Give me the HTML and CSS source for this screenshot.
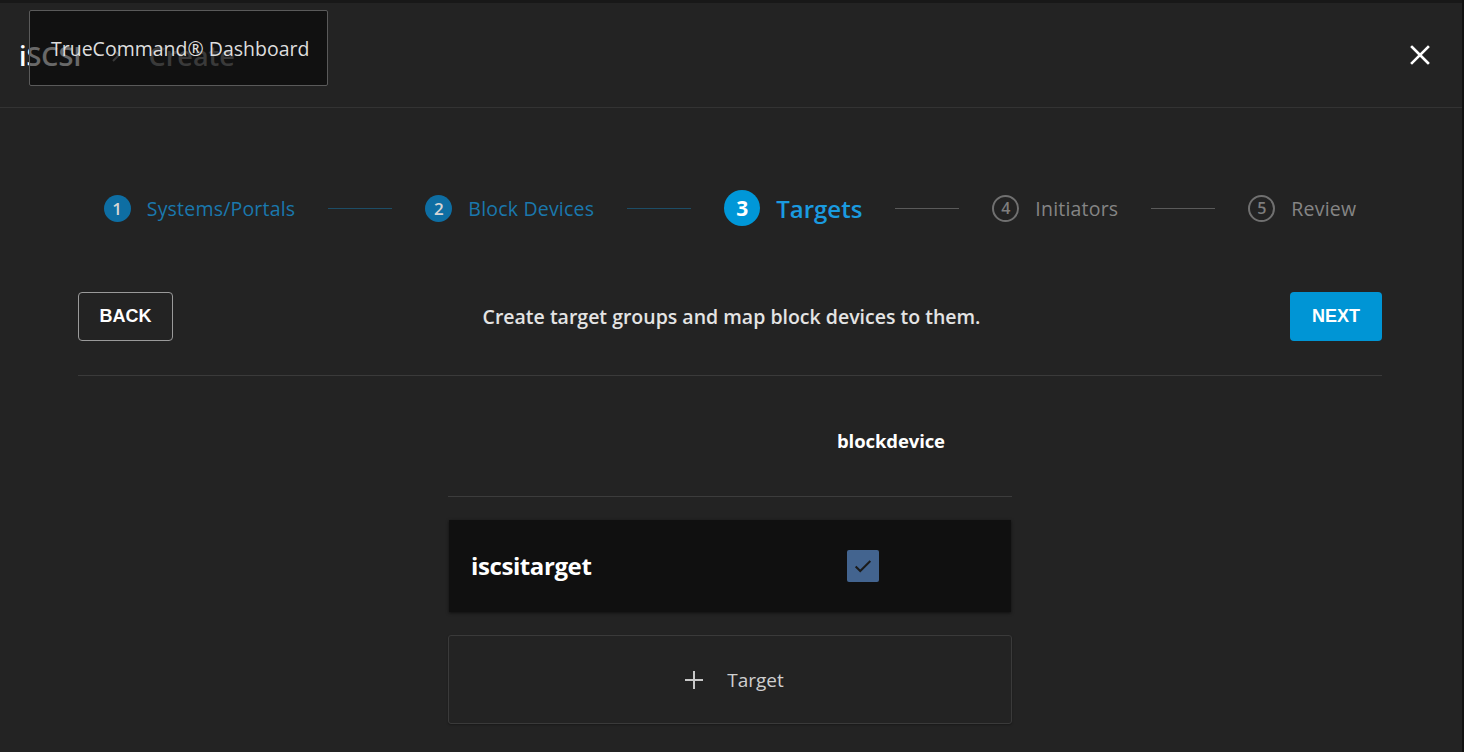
FILE: index.html
```html
<!DOCTYPE html>
<html>
<head>
<meta charset="utf-8">
<link rel="stylesheet" href="styles.css">
</head>
<body>
<div class="app">
  <header class="header">
    <h1 class="title"><span class="crumb">iSCSI</span><span class="chev"><svg width="12" height="16" viewBox="0 0 12 16"><path d="M3 2l6 6-6 6" fill="none" stroke="#8a8a8a" stroke-width="2"/></svg></span><span class="crumb-cur">Create</span></h1>
    <div class="tooltip">TrueCommand® Dashboard</div>
    <button class="close" aria-label="close"><svg width="20" height="20" viewBox="0 0 20 20"><path d="M2 2L18 18M18 2L2 18" stroke="#fff" stroke-width="2.6" stroke-linecap="square"/></svg></button>
  </header>
  <main class="main">
    <nav class="stepper">
      <div class="step done"><span class="num">1</span><span class="label">Systems/Portals</span></div>
      <span class="line done"></span>
      <div class="step done"><span class="num">2</span><span class="label">Block Devices</span></div>
      <span class="line done"></span>
      <div class="step active"><span class="num">3</span><span class="label">Targets</span></div>
      <span class="line"></span>
      <div class="step todo"><span class="num">4</span><span class="label">Initiators</span></div>
      <span class="line"></span>
      <div class="step todo"><span class="num">5</span><span class="label">Review</span></div>
    </nav>
    <div class="actions">
      <button class="btn btn-back">BACK</button>
      <p class="desc">Create target groups and map block devices to them.</p>
      <button class="btn btn-next">NEXT</button>
    </div>
    <div class="table">
      <div class="thead">
        <span></span>
        <span class="col">blockdevice</span>
      </div>
      <div class="row">
        <span class="name">iscsitarget</span>
        <span class="cell"><span class="checkbox"><svg width="22" height="22" viewBox="0 0 24 24"><path d="M4 12.5l5 5L20 6.5" fill="none" stroke="#1b1b1b" stroke-width="2.2"/></svg></span></span>
      </div>
      <div class="add">
        <svg width="22" height="22" viewBox="0 0 22 22"><path d="M11 2v18M2 11h18" stroke="#c8c8c8" stroke-width="2"/></svg>
        <span>Target</span>
      </div>
    </div>
  </main>
</div>
</body>
</html>
```
FILE: styles.css
```css
* { box-sizing: border-box; }
html, body { margin: 0; padding: 0; }
body {
  background: #111;
  font-family: "Open Sans", "Noto Sans", sans-serif;
  color: #fff;
  width: 1464px;
  height: 752px;
  overflow: hidden;
}
.app {
  width: 1462px;
  height: 752px;
  background: #232323;
  border-top: 3px solid #181818;
}
.header {
  position: relative;
  height: 105px;
  border-bottom: 1px solid #333;
  display: flex;
  align-items: center;
  padding: 0 32px 0 19px;
  justify-content: space-between;
}
.title {
  margin: 0;
  font-size: 27px;
  font-weight: 600;
  display: flex;
  align-items: center;
  letter-spacing: 0;
}
.crumb { color: #fff; }
.chev { display: inline-flex; margin: 0 27px 0 28px; }
.crumb-cur { color: #8a8a8a; }
.tooltip {
  position: absolute;
  left: 29px;
  top: 7px;
  width: 299px;
  height: 76px;
  background: rgba(5, 5, 5, 0.6);
  border: 1px solid #5a5a5a;
  border-radius: 2px;
  color: #dedede;
  font-size: 19.5px;
  padding: 0 0 0 21px;
  display: flex;
  align-items: center;
  letter-spacing: 0;
}
.close {
  background: none;
  border: 0;
  padding: 0;
  margin-top: 0;
  display: flex;
  cursor: pointer;
}
.main {
  padding: 0 80px 0 78px;
}
.stepper {
  display: flex;
  align-items: center;
  justify-content: center;
  height: 72px;
  margin-top: 64px;
}
.step {
  display: flex;
  align-items: center;
  gap: 16px;
  font-size: 19.5px;
  letter-spacing: 0.2px;
}
.num {
  width: 27px;
  height: 27px;
  border-radius: 50%;
  display: flex;
  align-items: center;
  justify-content: center;
  font-size: 17px;
  font-weight: 600;
  letter-spacing: 0;
}
.step.done .num { background: #0e6ea3; color: #d6d6d6; }
.step.done .label { color: #1a78ad; }
.step.active .num {
  width: 36px; height: 36px;
  background: #0097d8;
  color: #fff;
  font-size: 21px;
  font-weight: 700;
}
.step.active { font-size: 24px; letter-spacing: 0; }
.step.active .label { color: #1a9be0; font-weight: 600; }
.step.todo .num {
  border: 2px solid #707070;
  color: #7e7e7e;
  font-size: 16px;
}
.step.todo .label { color: #858585; }
.line {
  width: 64px;
  height: 1px;
  background: #5a5a5a;
  margin: 0 33px;
}
.line.done { background: #1d4d66; }
.actions {
  display: flex;
  align-items: center;
  justify-content: space-between;
  margin-top: 48px;
  padding-bottom: 34px;
  border-bottom: 1px solid #3a3a3a;
}
.btn {
  font-family: "Liberation Sans", Arial, sans-serif;
  font-weight: 700;
  font-size: 18px;
  color: #fff;
  height: 49px;
  border-radius: 4px;
  cursor: pointer;
}
.btn-back {
  width: 95px;
  background: transparent;
  border: 1px solid #9a9a9a;
}
.btn-next {
  width: 92px;
  background: #0095d5;
  border: 0;
}
.desc {
  margin: 0;
  font-size: 19.5px;
  font-weight: 600;
  color: #e4e4e4;
  letter-spacing: 0;
}
.table {
  width: 564px;
  margin: 0 auto;
}
.thead {
  display: grid;
  grid-template-columns: 389px 1fr;
  height: 121px;
  align-items: center;
  border-bottom: 1px solid #3c3c3c;
  padding-top: 8px;
}
.col {
  font-size: 18.5px;
  font-weight: 700;
  color: #fff;
  letter-spacing: -0.1px;
}
.row {
  margin: 23px 1px 0;
  height: 92px;
  background: #101010;
  box-shadow: 0 1px 3px rgba(0,0,0,0.6);
  display: grid;
  grid-template-columns: 398px 1fr;
  align-items: center;
}
.name {
  padding-left: 22px;
  font-size: 24px;
  font-weight: 700;
  letter-spacing: -0.4px;
  color: #fff;
  margin-top: -2px;
}
.checkbox {
  width: 32px;
  height: 32px;
  border-radius: 2px;
  background: #43648f;
  display: flex;
  align-items: center;
  justify-content: center;
}
.add {
  margin-top: 23px;
  height: 89px;
  border: 1px solid #3a3a3a;
  border-radius: 3px;
  background: #232323;
  box-shadow: 0 1px 2px rgba(0,0,0,0.3);
  display: flex;
  align-items: center;
  justify-content: center;
  gap: 22px;
  font-size: 19px;
  color: #cfcfcf;
  padding-left: 7px;
}
```
